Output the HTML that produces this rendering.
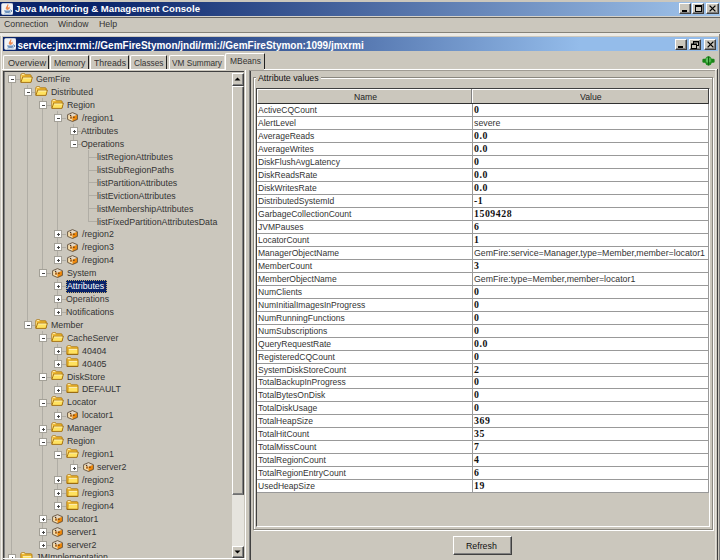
<!DOCTYPE html>
<html><head><meta charset="utf-8"><style>
html,body{margin:0;padding:0;}
body{width:720px;height:560px;overflow:hidden;position:relative;background:#CBC7BD;font-family:'Liberation Sans', sans-serif;}
.t{position:absolute;white-space:nowrap;line-height:1;}
.b{position:absolute;background:#CBC7BD;box-sizing:border-box;border-top:1px solid #fff;border-left:1px solid #fff;border-right:1px solid #404040;border-bottom:1px solid #404040;box-shadow:inset -1px -1px 0 #808080;}
</style></head><body>

<div style="position:absolute;left:0px;top:2px;width:720px;height:14px;background:linear-gradient(to right,#0A246A 0px,#0A246A 97px,#A6CAF0 738px);"></div>
<svg style="position:absolute;left:1px;top:3px" width="12" height="12" viewBox="0 0 12 12" preserveAspectRatio="none"><rect x="0.4" y="0.2" width="11.6" height="11.6" rx="1.8" fill="#F2F4F6" stroke="#D8DEE6" stroke-width="0.5"/>
<path d="M6.8 1 C8.8 2 5.8 3.4 7.6 4.4 C9.2 5.3 7.8 6.5 6.6 6.9 C4.6 6.6 4.2 5.2 5.2 4 C6 3 6.2 2 6.8 1Z" fill="#EE8A50"/>
<path d="M8.3 3.2 C9.6 4 9.4 5.6 8.2 6.6 C8.6 5.6 8 4.4 8.3 3.2Z" fill="#F2A070"/>
<path d="M3.2 7 Q6.6 8.2 9.6 7 L9 9.4 Q6.4 10.6 3.8 9.4 Z" fill="#6E94C0"/>
<path d="M9.4 6.6 L11 8 L9.4 9.4" fill="none" stroke="#5A7EAC" stroke-width="0.9"/>
<path d="M3 10.8 Q6.4 11.6 9.6 10.8" fill="none" stroke="#8AAAD0" stroke-width="0.7"/></svg>
<div class="t" style="left:15px;top:3.8px;font-size:9.6px;color:#fff;font-weight:bold;font-family:'Liberation Sans', sans-serif;">Java Monitoring &amp; Management Console</div>
<div class="b" style="left:679px;top:3px;width:12px;height:11px;"></div>
<div style="position:absolute;left:682px;top:10px;width:5px;height:2px;background:#000;"></div>
<div class="b" style="left:692px;top:3px;width:12px;height:11px;"></div>
<div style="position:absolute;left:694.5px;top:5px;width:7px;height:7px;box-sizing:border-box;border:1px solid #000;border-top-width:2px;"></div>
<div class="b" style="left:706px;top:3px;width:13px;height:11px;"></div>
<svg style="position:absolute;left:709px;top:5px" width="7" height="7" viewBox="0 0 7 7" preserveAspectRatio="none"><path d="M0.6 0.6 L6.4 6.4 M6.4 0.6 L0.6 6.4" stroke="#000" stroke-width="1.3"/></svg>
<div style="position:absolute;left:0px;top:16px;width:720px;height:1px;background:#D6D2CA;"></div>
<div style="position:absolute;left:0px;top:17px;width:720px;height:1px;background:#66645E;"></div>
<div class="t" style="left:3.5px;top:20px;font-size:8.8px;color:#333;font-weight:normal;font-family:'Liberation Sans', sans-serif;transform:scaleX(0.9929);transform-origin:0 0;">Connection</div>
<div class="t" style="left:58px;top:20px;font-size:8.8px;color:#333;font-weight:normal;font-family:'Liberation Sans', sans-serif;transform:scaleX(0.9745);transform-origin:0 0;">Window</div>
<div class="t" style="left:99px;top:20px;font-size:8.8px;color:#333;font-weight:normal;font-family:'Liberation Sans', sans-serif;">Help</div>
<div style="position:absolute;left:0px;top:32px;width:720px;height:1px;background:#858279;"></div>
<div style="position:absolute;left:0px;top:33px;width:720px;height:3px;background:#ECEAE5;"></div>
<div style="position:absolute;left:1px;top:34px;width:1px;height:526px;background:#F2F0EC;"></div>
<div style="position:absolute;left:719px;top:34px;width:1px;height:526px;background:#808080;"></div>
<div style="position:absolute;left:3px;top:37px;width:715px;height:14px;background:linear-gradient(to right,#0A246A 0px,#0A246A 87px,#94BCEA 577px);"></div>
<svg style="position:absolute;left:4px;top:38px" width="12" height="12" viewBox="0 0 12 12" preserveAspectRatio="none"><rect x="0.4" y="0.2" width="11.6" height="11.6" rx="1.8" fill="#F2F4F6" stroke="#D8DEE6" stroke-width="0.5"/>
<path d="M6.8 1 C8.8 2 5.8 3.4 7.6 4.4 C9.2 5.3 7.8 6.5 6.6 6.9 C4.6 6.6 4.2 5.2 5.2 4 C6 3 6.2 2 6.8 1Z" fill="#EE8A50"/>
<path d="M8.3 3.2 C9.6 4 9.4 5.6 8.2 6.6 C8.6 5.6 8 4.4 8.3 3.2Z" fill="#F2A070"/>
<path d="M3.2 7 Q6.6 8.2 9.6 7 L9 9.4 Q6.4 10.6 3.8 9.4 Z" fill="#6E94C0"/>
<path d="M9.4 6.6 L11 8 L9.4 9.4" fill="none" stroke="#5A7EAC" stroke-width="0.9"/>
<path d="M3 10.8 Q6.4 11.6 9.6 10.8" fill="none" stroke="#8AAAD0" stroke-width="0.7"/></svg>
<div class="t" style="left:17.5px;top:40.5px;font-size:10px;color:#fff;font-weight:bold;font-family:'Liberation Sans', sans-serif;">service:jmx:rmi://GemFireStymon/jndi/rmi://GemFireStymon:1099/jmxrmi</div>
<div class="b" style="left:675px;top:39px;width:12px;height:11px;"></div>
<div style="position:absolute;left:678px;top:46px;width:5px;height:2px;background:#000;"></div>
<div class="b" style="left:689px;top:39px;width:12px;height:11px;"></div>
<svg style="position:absolute;left:691px;top:40.5px" width="8" height="8" viewBox="0 0 8 8" preserveAspectRatio="none"><rect x="2.5" y="0.5" width="5" height="4" fill="none" stroke="#000" stroke-width="1"/><rect x="2.5" y="0.5" width="5" height="1" fill="#000"/><rect x="0.5" y="3" width="5" height="4.5" fill="#CBC7BD" stroke="#000" stroke-width="1"/><rect x="0.5" y="3" width="5" height="1" fill="#000"/></svg>
<div class="b" style="left:704px;top:39px;width:12px;height:11px;"></div>
<svg style="position:absolute;left:707px;top:41px" width="7" height="7" viewBox="0 0 7 7" preserveAspectRatio="none"><path d="M0.6 0.6 L6.4 6.4 M6.4 0.6 L0.6 6.4" stroke="#000" stroke-width="1.3"/></svg>
<div style="position:absolute;left:3px;top:55px;width:46px;height:14px;box-sizing:border-box;border-top:1px solid #fff;border-left:1px solid #fff;border-right:1px solid #202020;border-radius:2px 1px 0 0;"></div>
<div class="t" style="left:8px;top:58.5px;font-size:8.8px;color:#333;font-weight:normal;font-family:'Liberation Sans', sans-serif;transform:scaleX(1.0362);transform-origin:0 0;">Overview</div>
<div style="position:absolute;left:50px;top:55px;width:39px;height:14px;box-sizing:border-box;border-top:1px solid #fff;border-left:1px solid #fff;border-right:1px solid #202020;border-radius:2px 1px 0 0;"></div>
<div class="t" style="left:54px;top:58.5px;font-size:8.8px;color:#333;font-weight:normal;font-family:'Liberation Sans', sans-serif;transform:scaleX(0.9881);transform-origin:0 0;">Memory</div>
<div style="position:absolute;left:90px;top:55px;width:39px;height:14px;box-sizing:border-box;border-top:1px solid #fff;border-left:1px solid #fff;border-right:1px solid #202020;border-radius:2px 1px 0 0;"></div>
<div class="t" style="left:93.7px;top:58.5px;font-size:8.8px;color:#333;font-weight:normal;font-family:'Liberation Sans', sans-serif;transform:scaleX(0.9913);transform-origin:0 0;">Threads</div>
<div style="position:absolute;left:130px;top:55px;width:37px;height:14px;box-sizing:border-box;border-top:1px solid #fff;border-left:1px solid #fff;border-right:1px solid #202020;border-radius:2px 1px 0 0;"></div>
<div class="t" style="left:134px;top:58.5px;font-size:8.8px;color:#333;font-weight:normal;font-family:'Liberation Sans', sans-serif;transform:scaleX(0.9426);transform-origin:0 0;">Classes</div>
<div style="position:absolute;left:169px;top:55px;width:56px;height:14px;box-sizing:border-box;border-top:1px solid #fff;border-left:1px solid #fff;border-right:1px solid #E8E6E0;border-radius:2px 1px 0 0;"></div>
<div class="t" style="left:172px;top:58.5px;font-size:8.8px;color:#333;font-weight:normal;font-family:'Liberation Sans', sans-serif;transform:scaleX(0.9382);transform-origin:0 0;">VM Summary</div>
<div style="position:absolute;left:225px;top:53px;width:40px;height:17px;background:#CBC7BD;box-sizing:border-box;border-top:1px solid #fff;border-left:1px solid #fff;border-right:1px solid #202020;border-radius:2px 1px 0 0;"></div>
<div class="t" style="left:230px;top:56.5px;font-size:8.8px;color:#333;font-weight:normal;font-family:'Liberation Sans', sans-serif;transform:scaleX(0.9603);transform-origin:0 0;">MBeans</div>
<div style="position:absolute;left:2px;top:69px;width:223px;height:1px;background:#fff;"></div>
<div style="position:absolute;left:264px;top:69px;width:453px;height:1px;background:#fff;"></div>
<div style="position:absolute;left:717px;top:69px;width:1px;height:491px;background:#404040;"></div>
<svg style="position:absolute;left:701.5px;top:56px" width="13" height="10" viewBox="0 0 13 10" preserveAspectRatio="none"><rect x="0.4" y="2.8" width="4.2" height="4" rx="1.2" fill="#188418"/><rect x="8.4" y="2.8" width="4.2" height="4" rx="1.2" fill="#188418"/><ellipse cx="6.5" cy="4.9" rx="3.6" ry="4.6" fill="#1E901E"/><ellipse cx="5.3" cy="4.2" rx="1.3" ry="2.6" fill="#62C062"/><ellipse cx="7.8" cy="4.2" rx="1.1" ry="2.4" fill="#52B452"/><path d="M6.5 0.6 V9.4" stroke="#0E5A0E" stroke-width="0.9"/></svg>
<div style="position:absolute;left:3px;top:71px;width:241px;height:489px;box-sizing:border-box;border-top:1px solid #404040;border-left:1px solid #404040;"></div>
<div style="position:absolute;left:4px;top:72px;width:1px;height:488px;background:#808080;"></div>
<div style="position:absolute;left:245px;top:70px;width:1px;height:490px;background:#fff;"></div>
<div style="position:absolute;left:249px;top:70px;width:467px;height:490px;box-sizing:border-box;border-top:1px solid #A09C94;border-left:1px solid #808080;"></div>
<div style="position:absolute;left:250px;top:71px;width:1px;height:489px;background:#404040;"></div>
<div style="position:absolute;left:715px;top:70px;width:1px;height:490px;background:#E4E1DA;"></div>
<div style="position:absolute;left:253px;top:77px;width:460px;height:453px;box-sizing:border-box;border:1px solid #8A877F;box-shadow:inset 1px 1px 0 #fff, 1px 1px 0 #fff;"></div>
<div class="t" style="left:256px;top:74px;font-size:8.8px;color:#111;background:#CBC7BD;padding:0 2px;">Attribute values</div>
<div style="position:absolute;left:256px;top:88px;width:454px;height:439px;box-sizing:border-box;border-top:1px solid #404040;border-left:1px solid #404040;border-right:1px solid #fff;border-bottom:1px solid #fff;"></div>
<div style="position:absolute;left:257px;top:89px;width:452px;height:15px;background:#CBC7BD;box-sizing:border-box;border-bottom:1px solid #303030;border-top:1px solid #fff;border-left:1px solid #fff;"></div>
<div style="position:absolute;left:708px;top:89px;width:1px;height:15px;background:#404040;"></div>
<div style="position:absolute;left:471px;top:89px;width:1px;height:14px;background:#808080;"></div>
<div style="position:absolute;left:472px;top:89px;width:1px;height:14px;background:#fff;"></div>
<div class="t" style="left:353.5px;top:92.5px;font-size:8.8px;color:#222;font-weight:normal;font-family:'Liberation Sans', sans-serif;transform:scaleX(0.9799);transform-origin:0 0;">Name</div>
<div class="t" style="left:579.5px;top:92.5px;font-size:8.8px;color:#222;font-weight:normal;font-family:'Liberation Sans', sans-serif;transform:scaleX(0.9884);transform-origin:0 0;">Value</div>
<div style="position:absolute;left:257px;top:104px;width:452px;height:388px;background:#fff;"></div>
<div style="position:absolute;left:257px;top:116px;width:452px;height:1px;background:#999;"></div>
<div class="t" style="left:258px;top:105.5px;font-size:8.8px;color:#333;font-weight:normal;font-family:'Liberation Sans', sans-serif;transform:scaleX(0.9700);transform-origin:0 0;">ActiveCQCount</div>
<div class="t" style="left:474px;top:104.5px;font-size:9.8px;color:#111;font-weight:bold;font-family:'Liberation Serif', serif;letter-spacing:0.55px;">0</div>
<div style="position:absolute;left:257px;top:129px;width:452px;height:1px;background:#999;"></div>
<div class="t" style="left:258px;top:118.5px;font-size:8.8px;color:#333;font-weight:normal;font-family:'Liberation Sans', sans-serif;transform:scaleX(0.9700);transform-origin:0 0;">AlertLevel</div>
<div class="t" style="left:474px;top:118.5px;font-size:8.8px;color:#333;font-weight:normal;font-family:'Liberation Sans', sans-serif;">severe</div>
<div style="position:absolute;left:257px;top:142px;width:452px;height:1px;background:#999;"></div>
<div class="t" style="left:258px;top:131.5px;font-size:8.8px;color:#333;font-weight:normal;font-family:'Liberation Sans', sans-serif;transform:scaleX(0.9700);transform-origin:0 0;">AverageReads</div>
<div class="t" style="left:474px;top:130.5px;font-size:9.8px;color:#111;font-weight:bold;font-family:'Liberation Serif', serif;letter-spacing:0.55px;">0.0</div>
<div style="position:absolute;left:257px;top:155px;width:452px;height:1px;background:#999;"></div>
<div class="t" style="left:258px;top:144.5px;font-size:8.8px;color:#333;font-weight:normal;font-family:'Liberation Sans', sans-serif;transform:scaleX(0.9700);transform-origin:0 0;">AverageWrites</div>
<div class="t" style="left:474px;top:143.5px;font-size:9.8px;color:#111;font-weight:bold;font-family:'Liberation Serif', serif;letter-spacing:0.55px;">0.0</div>
<div style="position:absolute;left:257px;top:168px;width:452px;height:1px;background:#999;"></div>
<div class="t" style="left:258px;top:157.5px;font-size:8.8px;color:#333;font-weight:normal;font-family:'Liberation Sans', sans-serif;transform:scaleX(0.9700);transform-origin:0 0;">DiskFlushAvgLatency</div>
<div class="t" style="left:474px;top:156.5px;font-size:9.8px;color:#111;font-weight:bold;font-family:'Liberation Serif', serif;letter-spacing:0.55px;">0</div>
<div style="position:absolute;left:257px;top:181px;width:452px;height:1px;background:#999;"></div>
<div class="t" style="left:258px;top:170.5px;font-size:8.8px;color:#333;font-weight:normal;font-family:'Liberation Sans', sans-serif;transform:scaleX(0.9700);transform-origin:0 0;">DiskReadsRate</div>
<div class="t" style="left:474px;top:169.5px;font-size:9.8px;color:#111;font-weight:bold;font-family:'Liberation Serif', serif;letter-spacing:0.55px;">0.0</div>
<div style="position:absolute;left:257px;top:194px;width:452px;height:1px;background:#999;"></div>
<div class="t" style="left:258px;top:183.5px;font-size:8.8px;color:#333;font-weight:normal;font-family:'Liberation Sans', sans-serif;transform:scaleX(0.9700);transform-origin:0 0;">DiskWritesRate</div>
<div class="t" style="left:474px;top:182.5px;font-size:9.8px;color:#111;font-weight:bold;font-family:'Liberation Serif', serif;letter-spacing:0.55px;">0.0</div>
<div style="position:absolute;left:257px;top:207px;width:452px;height:1px;background:#999;"></div>
<div class="t" style="left:258px;top:196.5px;font-size:8.8px;color:#333;font-weight:normal;font-family:'Liberation Sans', sans-serif;transform:scaleX(0.9700);transform-origin:0 0;">DistributedSystemId</div>
<div class="t" style="left:474px;top:195.5px;font-size:9.8px;color:#111;font-weight:bold;font-family:'Liberation Serif', serif;letter-spacing:0.55px;">-1</div>
<div style="position:absolute;left:257px;top:220px;width:452px;height:1px;background:#999;"></div>
<div class="t" style="left:258px;top:209.5px;font-size:8.8px;color:#333;font-weight:normal;font-family:'Liberation Sans', sans-serif;transform:scaleX(0.9700);transform-origin:0 0;">GarbageCollectionCount</div>
<div class="t" style="left:474px;top:208.5px;font-size:9.8px;color:#111;font-weight:bold;font-family:'Liberation Serif', serif;letter-spacing:0.55px;">1509428</div>
<div style="position:absolute;left:257px;top:233px;width:452px;height:1px;background:#999;"></div>
<div class="t" style="left:258px;top:222.5px;font-size:8.8px;color:#333;font-weight:normal;font-family:'Liberation Sans', sans-serif;transform:scaleX(0.9700);transform-origin:0 0;">JVMPauses</div>
<div class="t" style="left:474px;top:221.5px;font-size:9.8px;color:#111;font-weight:bold;font-family:'Liberation Serif', serif;letter-spacing:0.55px;">6</div>
<div style="position:absolute;left:257px;top:246px;width:452px;height:1px;background:#999;"></div>
<div class="t" style="left:258px;top:235.5px;font-size:8.8px;color:#333;font-weight:normal;font-family:'Liberation Sans', sans-serif;transform:scaleX(0.9700);transform-origin:0 0;">LocatorCount</div>
<div class="t" style="left:474px;top:234.5px;font-size:9.8px;color:#111;font-weight:bold;font-family:'Liberation Serif', serif;letter-spacing:0.55px;">1</div>
<div style="position:absolute;left:257px;top:259px;width:452px;height:1px;background:#999;"></div>
<div class="t" style="left:258px;top:248.5px;font-size:8.8px;color:#333;font-weight:normal;font-family:'Liberation Sans', sans-serif;transform:scaleX(0.9700);transform-origin:0 0;">ManagerObjectName</div>
<div class="t" style="left:474px;top:248.5px;font-size:8.8px;color:#333;font-weight:normal;font-family:'Liberation Sans', sans-serif;">GemFire:service=Manager,type=Member,member=locator1</div>
<div style="position:absolute;left:257px;top:272px;width:452px;height:1px;background:#999;"></div>
<div class="t" style="left:258px;top:261.5px;font-size:8.8px;color:#333;font-weight:normal;font-family:'Liberation Sans', sans-serif;transform:scaleX(0.9700);transform-origin:0 0;">MemberCount</div>
<div class="t" style="left:474px;top:260.5px;font-size:9.8px;color:#111;font-weight:bold;font-family:'Liberation Serif', serif;letter-spacing:0.55px;">3</div>
<div style="position:absolute;left:257px;top:285px;width:452px;height:1px;background:#999;"></div>
<div class="t" style="left:258px;top:274.5px;font-size:8.8px;color:#333;font-weight:normal;font-family:'Liberation Sans', sans-serif;transform:scaleX(0.9700);transform-origin:0 0;">MemberObjectName</div>
<div class="t" style="left:474px;top:274.5px;font-size:8.8px;color:#333;font-weight:normal;font-family:'Liberation Sans', sans-serif;">GemFire:type=Member,member=locator1</div>
<div style="position:absolute;left:257px;top:298px;width:452px;height:1px;background:#999;"></div>
<div class="t" style="left:258px;top:287.5px;font-size:8.8px;color:#333;font-weight:normal;font-family:'Liberation Sans', sans-serif;transform:scaleX(0.9700);transform-origin:0 0;">NumClients</div>
<div class="t" style="left:474px;top:286.5px;font-size:9.8px;color:#111;font-weight:bold;font-family:'Liberation Serif', serif;letter-spacing:0.55px;">0</div>
<div style="position:absolute;left:257px;top:311px;width:452px;height:1px;background:#999;"></div>
<div class="t" style="left:258px;top:300.5px;font-size:8.8px;color:#333;font-weight:normal;font-family:'Liberation Sans', sans-serif;transform:scaleX(0.9700);transform-origin:0 0;">NumInitialImagesInProgress</div>
<div class="t" style="left:474px;top:299.5px;font-size:9.8px;color:#111;font-weight:bold;font-family:'Liberation Serif', serif;letter-spacing:0.55px;">0</div>
<div style="position:absolute;left:257px;top:324px;width:452px;height:1px;background:#999;"></div>
<div class="t" style="left:258px;top:313.5px;font-size:8.8px;color:#333;font-weight:normal;font-family:'Liberation Sans', sans-serif;transform:scaleX(0.9700);transform-origin:0 0;">NumRunningFunctions</div>
<div class="t" style="left:474px;top:312.5px;font-size:9.8px;color:#111;font-weight:bold;font-family:'Liberation Serif', serif;letter-spacing:0.55px;">0</div>
<div style="position:absolute;left:257px;top:337px;width:452px;height:1px;background:#999;"></div>
<div class="t" style="left:258px;top:326.5px;font-size:8.8px;color:#333;font-weight:normal;font-family:'Liberation Sans', sans-serif;transform:scaleX(0.9700);transform-origin:0 0;">NumSubscriptions</div>
<div class="t" style="left:474px;top:325.5px;font-size:9.8px;color:#111;font-weight:bold;font-family:'Liberation Serif', serif;letter-spacing:0.55px;">0</div>
<div style="position:absolute;left:257px;top:350px;width:452px;height:1px;background:#999;"></div>
<div class="t" style="left:258px;top:339.5px;font-size:8.8px;color:#333;font-weight:normal;font-family:'Liberation Sans', sans-serif;transform:scaleX(0.9700);transform-origin:0 0;">QueryRequestRate</div>
<div class="t" style="left:474px;top:338.5px;font-size:9.8px;color:#111;font-weight:bold;font-family:'Liberation Serif', serif;letter-spacing:0.55px;">0.0</div>
<div style="position:absolute;left:257px;top:363px;width:452px;height:1px;background:#999;"></div>
<div class="t" style="left:258px;top:352.5px;font-size:8.8px;color:#333;font-weight:normal;font-family:'Liberation Sans', sans-serif;transform:scaleX(0.9700);transform-origin:0 0;">RegisteredCQCount</div>
<div class="t" style="left:474px;top:351.5px;font-size:9.8px;color:#111;font-weight:bold;font-family:'Liberation Serif', serif;letter-spacing:0.55px;">0</div>
<div style="position:absolute;left:257px;top:376px;width:452px;height:1px;background:#999;"></div>
<div class="t" style="left:258px;top:365.5px;font-size:8.8px;color:#333;font-weight:normal;font-family:'Liberation Sans', sans-serif;transform:scaleX(0.9700);transform-origin:0 0;">SystemDiskStoreCount</div>
<div class="t" style="left:474px;top:364.5px;font-size:9.8px;color:#111;font-weight:bold;font-family:'Liberation Serif', serif;letter-spacing:0.55px;">2</div>
<div style="position:absolute;left:257px;top:388px;width:452px;height:1px;background:#999;"></div>
<div class="t" style="left:258px;top:377.5px;font-size:8.8px;color:#333;font-weight:normal;font-family:'Liberation Sans', sans-serif;transform:scaleX(0.9700);transform-origin:0 0;">TotalBackupInProgress</div>
<div class="t" style="left:474px;top:376.5px;font-size:9.8px;color:#111;font-weight:bold;font-family:'Liberation Serif', serif;letter-spacing:0.55px;">0</div>
<div style="position:absolute;left:257px;top:401px;width:452px;height:1px;background:#999;"></div>
<div class="t" style="left:258px;top:390.5px;font-size:8.8px;color:#333;font-weight:normal;font-family:'Liberation Sans', sans-serif;transform:scaleX(0.9700);transform-origin:0 0;">TotalBytesOnDisk</div>
<div class="t" style="left:474px;top:389.5px;font-size:9.8px;color:#111;font-weight:bold;font-family:'Liberation Serif', serif;letter-spacing:0.55px;">0</div>
<div style="position:absolute;left:257px;top:414px;width:452px;height:1px;background:#999;"></div>
<div class="t" style="left:258px;top:403.5px;font-size:8.8px;color:#333;font-weight:normal;font-family:'Liberation Sans', sans-serif;transform:scaleX(0.9700);transform-origin:0 0;">TotalDiskUsage</div>
<div class="t" style="left:474px;top:402.5px;font-size:9.8px;color:#111;font-weight:bold;font-family:'Liberation Serif', serif;letter-spacing:0.55px;">0</div>
<div style="position:absolute;left:257px;top:427px;width:452px;height:1px;background:#999;"></div>
<div class="t" style="left:258px;top:416.5px;font-size:8.8px;color:#333;font-weight:normal;font-family:'Liberation Sans', sans-serif;transform:scaleX(0.9700);transform-origin:0 0;">TotalHeapSize</div>
<div class="t" style="left:474px;top:415.5px;font-size:9.8px;color:#111;font-weight:bold;font-family:'Liberation Serif', serif;letter-spacing:0.55px;">369</div>
<div style="position:absolute;left:257px;top:440px;width:452px;height:1px;background:#999;"></div>
<div class="t" style="left:258px;top:429.5px;font-size:8.8px;color:#333;font-weight:normal;font-family:'Liberation Sans', sans-serif;transform:scaleX(0.9700);transform-origin:0 0;">TotalHitCount</div>
<div class="t" style="left:474px;top:428.5px;font-size:9.8px;color:#111;font-weight:bold;font-family:'Liberation Serif', serif;letter-spacing:0.55px;">35</div>
<div style="position:absolute;left:257px;top:453px;width:452px;height:1px;background:#999;"></div>
<div class="t" style="left:258px;top:442.5px;font-size:8.8px;color:#333;font-weight:normal;font-family:'Liberation Sans', sans-serif;transform:scaleX(0.9700);transform-origin:0 0;">TotalMissCount</div>
<div class="t" style="left:474px;top:441.5px;font-size:9.8px;color:#111;font-weight:bold;font-family:'Liberation Serif', serif;letter-spacing:0.55px;">7</div>
<div style="position:absolute;left:257px;top:466px;width:452px;height:1px;background:#999;"></div>
<div class="t" style="left:258px;top:455.5px;font-size:8.8px;color:#333;font-weight:normal;font-family:'Liberation Sans', sans-serif;transform:scaleX(0.9700);transform-origin:0 0;">TotalRegionCount</div>
<div class="t" style="left:474px;top:454.5px;font-size:9.8px;color:#111;font-weight:bold;font-family:'Liberation Serif', serif;letter-spacing:0.55px;">4</div>
<div style="position:absolute;left:257px;top:479px;width:452px;height:1px;background:#999;"></div>
<div class="t" style="left:258px;top:468.5px;font-size:8.8px;color:#333;font-weight:normal;font-family:'Liberation Sans', sans-serif;transform:scaleX(0.9700);transform-origin:0 0;">TotalRegionEntryCount</div>
<div class="t" style="left:474px;top:467.5px;font-size:9.8px;color:#111;font-weight:bold;font-family:'Liberation Serif', serif;letter-spacing:0.55px;">6</div>
<div style="position:absolute;left:257px;top:492px;width:452px;height:1px;background:#999;"></div>
<div class="t" style="left:258px;top:481.5px;font-size:8.8px;color:#333;font-weight:normal;font-family:'Liberation Sans', sans-serif;transform:scaleX(0.9700);transform-origin:0 0;">UsedHeapSize</div>
<div class="t" style="left:474px;top:480.5px;font-size:9.8px;color:#111;font-weight:bold;font-family:'Liberation Serif', serif;letter-spacing:0.55px;">19</div>
<div style="position:absolute;left:472px;top:104px;width:1px;height:388px;background:#999;"></div>
<div style="position:absolute;left:708px;top:104px;width:1px;height:388px;background:#999;"></div>
<div class="b" style="left:453px;top:536px;width:59px;height:19px;"></div>
<div class="t" style="left:466px;top:541.5px;font-size:8.8px;color:#111;font-weight:normal;font-family:'Liberation Sans', sans-serif;">Refresh</div>
<div style="position:absolute;left:5px;top:72px;width:227px;height:486px;overflow:hidden;">
<div style="position:absolute;left:7px;top:7px;width:8px;height:1px;background:#B0ADA5;"></div>
<div style="position:absolute;left:22px;top:13px;width:1px;height:240px;background:#B0ADA5;"></div>
<div style="position:absolute;left:22px;top:20px;width:8px;height:1px;background:#B0ADA5;"></div>
<div style="position:absolute;left:37px;top:26px;width:1px;height:175px;background:#B0ADA5;"></div>
<div style="position:absolute;left:38px;top:33px;width:8px;height:1px;background:#B0ADA5;"></div>
<div style="position:absolute;left:52px;top:39px;width:1px;height:149px;background:#B0ADA5;"></div>
<div style="position:absolute;left:53px;top:46px;width:8px;height:1px;background:#B0ADA5;"></div>
<div style="position:absolute;left:68px;top:52px;width:1px;height:20px;background:#B0ADA5;"></div>
<div style="position:absolute;left:68px;top:59px;width:8px;height:1px;background:#B0ADA5;"></div>
<div style="position:absolute;left:68px;top:72px;width:8px;height:1px;background:#B0ADA5;"></div>
<div style="position:absolute;left:83px;top:78px;width:1px;height:72px;background:#B0ADA5;"></div>
<div style="position:absolute;left:84px;top:85px;width:8px;height:1px;background:#B0ADA5;"></div>
<div style="position:absolute;left:84px;top:98px;width:8px;height:1px;background:#B0ADA5;"></div>
<div style="position:absolute;left:84px;top:110px;width:8px;height:1px;background:#B0ADA5;"></div>
<div style="position:absolute;left:84px;top:123px;width:8px;height:1px;background:#B0ADA5;"></div>
<div style="position:absolute;left:84px;top:136px;width:8px;height:1px;background:#B0ADA5;"></div>
<div style="position:absolute;left:84px;top:149px;width:8px;height:1px;background:#B0ADA5;"></div>
<div style="position:absolute;left:53px;top:162px;width:8px;height:1px;background:#B0ADA5;"></div>
<div style="position:absolute;left:53px;top:175px;width:8px;height:1px;background:#B0ADA5;"></div>
<div style="position:absolute;left:53px;top:188px;width:8px;height:1px;background:#B0ADA5;"></div>
<div style="position:absolute;left:38px;top:201px;width:8px;height:1px;background:#B0ADA5;"></div>
<div style="position:absolute;left:52px;top:207px;width:1px;height:33px;background:#B0ADA5;"></div>
<div style="position:absolute;left:53px;top:214px;width:8px;height:1px;background:#B0ADA5;"></div>
<div style="position:absolute;left:53px;top:227px;width:8px;height:1px;background:#B0ADA5;"></div>
<div style="position:absolute;left:53px;top:240px;width:8px;height:1px;background:#B0ADA5;"></div>
<div style="position:absolute;left:22px;top:253px;width:8px;height:1px;background:#B0ADA5;"></div>
<div style="position:absolute;left:37px;top:259px;width:1px;height:214px;background:#B0ADA5;"></div>
<div style="position:absolute;left:38px;top:266px;width:8px;height:1px;background:#B0ADA5;"></div>
<div style="position:absolute;left:52px;top:272px;width:1px;height:20px;background:#B0ADA5;"></div>
<div style="position:absolute;left:53px;top:279px;width:8px;height:1px;background:#B0ADA5;"></div>
<div style="position:absolute;left:53px;top:292px;width:8px;height:1px;background:#B0ADA5;"></div>
<div style="position:absolute;left:38px;top:305px;width:8px;height:1px;background:#B0ADA5;"></div>
<div style="position:absolute;left:52px;top:311px;width:1px;height:7px;background:#B0ADA5;"></div>
<div style="position:absolute;left:53px;top:318px;width:8px;height:1px;background:#B0ADA5;"></div>
<div style="position:absolute;left:38px;top:331px;width:8px;height:1px;background:#B0ADA5;"></div>
<div style="position:absolute;left:52px;top:337px;width:1px;height:7px;background:#B0ADA5;"></div>
<div style="position:absolute;left:53px;top:344px;width:8px;height:1px;background:#B0ADA5;"></div>
<div style="position:absolute;left:38px;top:357px;width:8px;height:1px;background:#B0ADA5;"></div>
<div style="position:absolute;left:38px;top:370px;width:8px;height:1px;background:#B0ADA5;"></div>
<div style="position:absolute;left:52px;top:376px;width:1px;height:59px;background:#B0ADA5;"></div>
<div style="position:absolute;left:53px;top:382px;width:8px;height:1px;background:#B0ADA5;"></div>
<div style="position:absolute;left:68px;top:388px;width:1px;height:7px;background:#B0ADA5;"></div>
<div style="position:absolute;left:68px;top:395px;width:8px;height:1px;background:#B0ADA5;"></div>
<div style="position:absolute;left:53px;top:408px;width:8px;height:1px;background:#B0ADA5;"></div>
<div style="position:absolute;left:53px;top:421px;width:8px;height:1px;background:#B0ADA5;"></div>
<div style="position:absolute;left:53px;top:434px;width:8px;height:1px;background:#B0ADA5;"></div>
<div style="position:absolute;left:38px;top:447px;width:8px;height:1px;background:#B0ADA5;"></div>
<div style="position:absolute;left:38px;top:460px;width:8px;height:1px;background:#B0ADA5;"></div>
<div style="position:absolute;left:38px;top:473px;width:8px;height:1px;background:#B0ADA5;"></div>
<div style="position:absolute;left:7px;top:486px;width:8px;height:1px;background:#B0ADA5;"></div>
<div style="position:absolute;left:6px;top:7px;width:1px;height:479px;background:#B0ADA5;"></div>
<div style="position:absolute;left:3px;top:3px;width:8px;height:8px;box-sizing:border-box;border:1px solid #A3A097;background:#fff;"><div style="position:absolute;left:1.5px;top:2.5px;width:3px;height:1px;background:#484848;"></div></div>
<svg style="position:absolute;left:15px;top:1px" width="13" height="10" viewBox="0 0 12.6 10" preserveAspectRatio="none"><path d="M0.8 2 Q0.8 0.8 2 0.8 H4.4 L5.4 1.8 H10 Q10.8 1.8 10.8 2.6 V8.8 H0.8 Z" fill="#F0B830" stroke="#A87008" stroke-width="0.8"/>
<path d="M1.6 1.6 H4.2" stroke="#FFF4C8" stroke-width="0.9"/>
<path d="M1.4 2.4 V7" stroke="#FFE890" stroke-width="0.8"/>
<path d="M2.6 4.2 H12 L10.6 9.4 H0.8 Z" fill="#FFE260" stroke="#9A6406" stroke-width="0.8"/>
<path d="M3 5 H11" stroke="#FFF6C8" stroke-width="0.8"/></svg>
<div class="t" style="left:31px;top:3px;font-size:8.8px;color:#333;font-weight:normal;font-family:'Liberation Sans', sans-serif;">GemFire</div>
<div style="position:absolute;left:19px;top:16px;width:8px;height:8px;box-sizing:border-box;border:1px solid #A3A097;background:#fff;"><div style="position:absolute;left:1.5px;top:2.5px;width:3px;height:1px;background:#484848;"></div></div>
<svg style="position:absolute;left:30px;top:14px" width="13" height="10" viewBox="0 0 12.6 10" preserveAspectRatio="none"><path d="M0.8 2 Q0.8 0.8 2 0.8 H4.4 L5.4 1.8 H10 Q10.8 1.8 10.8 2.6 V8.8 H0.8 Z" fill="#F0B830" stroke="#A87008" stroke-width="0.8"/>
<path d="M1.6 1.6 H4.2" stroke="#FFF4C8" stroke-width="0.9"/>
<path d="M1.4 2.4 V7" stroke="#FFE890" stroke-width="0.8"/>
<path d="M2.6 4.2 H12 L10.6 9.4 H0.8 Z" fill="#FFE260" stroke="#9A6406" stroke-width="0.8"/>
<path d="M3 5 H11" stroke="#FFF6C8" stroke-width="0.8"/></svg>
<div class="t" style="left:46px;top:16px;font-size:8.8px;color:#333;font-weight:normal;font-family:'Liberation Sans', sans-serif;">Distributed</div>
<div style="position:absolute;left:34px;top:29px;width:8px;height:8px;box-sizing:border-box;border:1px solid #A3A097;background:#fff;"><div style="position:absolute;left:1.5px;top:2.5px;width:3px;height:1px;background:#484848;"></div></div>
<svg style="position:absolute;left:46px;top:27px" width="13" height="10" viewBox="0 0 12.6 10" preserveAspectRatio="none"><path d="M0.8 2 Q0.8 0.8 2 0.8 H4.4 L5.4 1.8 H10 Q10.8 1.8 10.8 2.6 V8.8 H0.8 Z" fill="#F0B830" stroke="#A87008" stroke-width="0.8"/>
<path d="M1.6 1.6 H4.2" stroke="#FFF4C8" stroke-width="0.9"/>
<path d="M1.4 2.4 V7" stroke="#FFE890" stroke-width="0.8"/>
<path d="M2.6 4.2 H12 L10.6 9.4 H0.8 Z" fill="#FFE260" stroke="#9A6406" stroke-width="0.8"/>
<path d="M3 5 H11" stroke="#FFF6C8" stroke-width="0.8"/></svg>
<div class="t" style="left:62px;top:29px;font-size:8.8px;color:#333;font-weight:normal;font-family:'Liberation Sans', sans-serif;">Region</div>
<div style="position:absolute;left:49px;top:42px;width:8px;height:8px;box-sizing:border-box;border:1px solid #A3A097;background:#fff;"><div style="position:absolute;left:1.5px;top:2.5px;width:3px;height:1px;background:#484848;"></div></div>
<svg style="position:absolute;left:62px;top:40px" width="11" height="10" viewBox="0 0 11 10" preserveAspectRatio="none"><path d="M5.5 0.6 L10.4 2.7 L5.5 4.7 L0.6 2.7 Z" fill="#E4D6C2"/>
<path d="M0.6 2.7 L5.5 4.7 V9.5 L0.6 7.4 Z" fill="#F8DEAA"/>
<path d="M5.5 4.7 L10.4 2.7 V7.4 L5.5 9.5 Z" fill="#F08808"/>
<path d="M5.5 0.6 L10.4 2.7 V7.4 L5.5 9.5 L0.6 7.4 V2.7 Z" fill="none" stroke="#5A4834" stroke-width="0.85"/>
<ellipse cx="4" cy="5.6" rx="0.9" ry="1.5" fill="#A8601A"/>
<circle cx="3.6" cy="3.4" r="0.7" fill="#403020"/>
<circle cx="6.9" cy="5.2" r="0.7" fill="#403020"/></svg>
<div class="t" style="left:77px;top:42px;font-size:8.8px;color:#333;font-weight:normal;font-family:'Liberation Sans', sans-serif;">/region1</div>
<div style="position:absolute;left:65px;top:55px;width:8px;height:8px;box-sizing:border-box;border:1px solid #A3A097;background:#fff;"><div style="position:absolute;left:1.5px;top:2.5px;width:3px;height:1px;background:#484848;"></div><div style="position:absolute;left:2.5px;top:1.5px;width:1px;height:3px;background:#484848;"></div></div>
<div class="t" style="left:76px;top:55px;font-size:8.8px;color:#333;font-weight:normal;font-family:'Liberation Sans', sans-serif;">Attributes</div>
<div style="position:absolute;left:65px;top:68px;width:8px;height:8px;box-sizing:border-box;border:1px solid #A3A097;background:#fff;"><div style="position:absolute;left:1.5px;top:2.5px;width:3px;height:1px;background:#484848;"></div></div>
<div class="t" style="left:76px;top:68px;font-size:8.8px;color:#333;font-weight:normal;font-family:'Liberation Sans', sans-serif;">Operations</div>
<div class="t" style="left:92px;top:81px;font-size:8.8px;color:#333;font-weight:normal;font-family:'Liberation Sans', sans-serif;">listRegionAttributes</div>
<div class="t" style="left:92px;top:94px;font-size:8.8px;color:#333;font-weight:normal;font-family:'Liberation Sans', sans-serif;">listSubRegionPaths</div>
<div class="t" style="left:92px;top:107px;font-size:8.8px;color:#333;font-weight:normal;font-family:'Liberation Sans', sans-serif;">listPartitionAttributes</div>
<div class="t" style="left:92px;top:120px;font-size:8.8px;color:#333;font-weight:normal;font-family:'Liberation Sans', sans-serif;">listEvictionAttributes</div>
<div class="t" style="left:92px;top:133px;font-size:8.8px;color:#333;font-weight:normal;font-family:'Liberation Sans', sans-serif;">listMembershipAttributes</div>
<div class="t" style="left:92px;top:146px;font-size:8.8px;color:#333;font-weight:normal;font-family:'Liberation Sans', sans-serif;">listFixedPartitionAttributesData</div>
<div style="position:absolute;left:49px;top:158px;width:8px;height:8px;box-sizing:border-box;border:1px solid #A3A097;background:#fff;"><div style="position:absolute;left:1.5px;top:2.5px;width:3px;height:1px;background:#484848;"></div><div style="position:absolute;left:2.5px;top:1.5px;width:1px;height:3px;background:#484848;"></div></div>
<svg style="position:absolute;left:62px;top:157px" width="11" height="10" viewBox="0 0 11 10" preserveAspectRatio="none"><path d="M5.5 0.6 L10.4 2.7 L5.5 4.7 L0.6 2.7 Z" fill="#E4D6C2"/>
<path d="M0.6 2.7 L5.5 4.7 V9.5 L0.6 7.4 Z" fill="#F8DEAA"/>
<path d="M5.5 4.7 L10.4 2.7 V7.4 L5.5 9.5 Z" fill="#F08808"/>
<path d="M5.5 0.6 L10.4 2.7 V7.4 L5.5 9.5 L0.6 7.4 V2.7 Z" fill="none" stroke="#5A4834" stroke-width="0.85"/>
<ellipse cx="4" cy="5.6" rx="0.9" ry="1.5" fill="#A8601A"/>
<circle cx="3.6" cy="3.4" r="0.7" fill="#403020"/>
<circle cx="6.9" cy="5.2" r="0.7" fill="#403020"/></svg>
<div class="t" style="left:77px;top:158px;font-size:8.8px;color:#333;font-weight:normal;font-family:'Liberation Sans', sans-serif;">/region2</div>
<div style="position:absolute;left:49px;top:171px;width:8px;height:8px;box-sizing:border-box;border:1px solid #A3A097;background:#fff;"><div style="position:absolute;left:1.5px;top:2.5px;width:3px;height:1px;background:#484848;"></div><div style="position:absolute;left:2.5px;top:1.5px;width:1px;height:3px;background:#484848;"></div></div>
<svg style="position:absolute;left:62px;top:170px" width="11" height="10" viewBox="0 0 11 10" preserveAspectRatio="none"><path d="M5.5 0.6 L10.4 2.7 L5.5 4.7 L0.6 2.7 Z" fill="#E4D6C2"/>
<path d="M0.6 2.7 L5.5 4.7 V9.5 L0.6 7.4 Z" fill="#F8DEAA"/>
<path d="M5.5 4.7 L10.4 2.7 V7.4 L5.5 9.5 Z" fill="#F08808"/>
<path d="M5.5 0.6 L10.4 2.7 V7.4 L5.5 9.5 L0.6 7.4 V2.7 Z" fill="none" stroke="#5A4834" stroke-width="0.85"/>
<ellipse cx="4" cy="5.6" rx="0.9" ry="1.5" fill="#A8601A"/>
<circle cx="3.6" cy="3.4" r="0.7" fill="#403020"/>
<circle cx="6.9" cy="5.2" r="0.7" fill="#403020"/></svg>
<div class="t" style="left:77px;top:171px;font-size:8.8px;color:#333;font-weight:normal;font-family:'Liberation Sans', sans-serif;">/region3</div>
<div style="position:absolute;left:49px;top:184px;width:8px;height:8px;box-sizing:border-box;border:1px solid #A3A097;background:#fff;"><div style="position:absolute;left:1.5px;top:2.5px;width:3px;height:1px;background:#484848;"></div><div style="position:absolute;left:2.5px;top:1.5px;width:1px;height:3px;background:#484848;"></div></div>
<svg style="position:absolute;left:62px;top:183px" width="11" height="10" viewBox="0 0 11 10" preserveAspectRatio="none"><path d="M5.5 0.6 L10.4 2.7 L5.5 4.7 L0.6 2.7 Z" fill="#E4D6C2"/>
<path d="M0.6 2.7 L5.5 4.7 V9.5 L0.6 7.4 Z" fill="#F8DEAA"/>
<path d="M5.5 4.7 L10.4 2.7 V7.4 L5.5 9.5 Z" fill="#F08808"/>
<path d="M5.5 0.6 L10.4 2.7 V7.4 L5.5 9.5 L0.6 7.4 V2.7 Z" fill="none" stroke="#5A4834" stroke-width="0.85"/>
<ellipse cx="4" cy="5.6" rx="0.9" ry="1.5" fill="#A8601A"/>
<circle cx="3.6" cy="3.4" r="0.7" fill="#403020"/>
<circle cx="6.9" cy="5.2" r="0.7" fill="#403020"/></svg>
<div class="t" style="left:77px;top:184px;font-size:8.8px;color:#333;font-weight:normal;font-family:'Liberation Sans', sans-serif;">/region4</div>
<div style="position:absolute;left:34px;top:197px;width:8px;height:8px;box-sizing:border-box;border:1px solid #A3A097;background:#fff;"><div style="position:absolute;left:1.5px;top:2.5px;width:3px;height:1px;background:#484848;"></div></div>
<svg style="position:absolute;left:47px;top:196px" width="11" height="10" viewBox="0 0 11 10" preserveAspectRatio="none"><path d="M5.5 0.6 L10.4 2.7 L5.5 4.7 L0.6 2.7 Z" fill="#E4D6C2"/>
<path d="M0.6 2.7 L5.5 4.7 V9.5 L0.6 7.4 Z" fill="#F8DEAA"/>
<path d="M5.5 4.7 L10.4 2.7 V7.4 L5.5 9.5 Z" fill="#F08808"/>
<path d="M5.5 0.6 L10.4 2.7 V7.4 L5.5 9.5 L0.6 7.4 V2.7 Z" fill="none" stroke="#5A4834" stroke-width="0.85"/>
<ellipse cx="4" cy="5.6" rx="0.9" ry="1.5" fill="#A8601A"/>
<circle cx="3.6" cy="3.4" r="0.7" fill="#403020"/>
<circle cx="6.9" cy="5.2" r="0.7" fill="#403020"/></svg>
<div class="t" style="left:62px;top:197px;font-size:8.8px;color:#333;font-weight:normal;font-family:'Liberation Sans', sans-serif;">System</div>
<div style="position:absolute;left:49px;top:210px;width:8px;height:8px;box-sizing:border-box;border:1px solid #A3A097;background:#fff;"><div style="position:absolute;left:1.5px;top:2.5px;width:3px;height:1px;background:#484848;"></div><div style="position:absolute;left:2.5px;top:1.5px;width:1px;height:3px;background:#484848;"></div></div>
<div style="position:absolute;left:61px;top:208px;width:41px;height:13px;background:#0A246A;box-sizing:border-box;border:1px dotted #C8B070;"></div>
<div class="t" style="left:62px;top:210px;font-size:8.8px;color:#fff;font-weight:normal;font-family:'Liberation Sans', sans-serif;">Attributes</div>
<div style="position:absolute;left:49px;top:223px;width:8px;height:8px;box-sizing:border-box;border:1px solid #A3A097;background:#fff;"><div style="position:absolute;left:1.5px;top:2.5px;width:3px;height:1px;background:#484848;"></div><div style="position:absolute;left:2.5px;top:1.5px;width:1px;height:3px;background:#484848;"></div></div>
<div class="t" style="left:61px;top:223px;font-size:8.8px;color:#333;font-weight:normal;font-family:'Liberation Sans', sans-serif;">Operations</div>
<div style="position:absolute;left:49px;top:236px;width:8px;height:8px;box-sizing:border-box;border:1px solid #A3A097;background:#fff;"><div style="position:absolute;left:1.5px;top:2.5px;width:3px;height:1px;background:#484848;"></div><div style="position:absolute;left:2.5px;top:1.5px;width:1px;height:3px;background:#484848;"></div></div>
<div class="t" style="left:61px;top:236px;font-size:8.8px;color:#333;font-weight:normal;font-family:'Liberation Sans', sans-serif;">Notifications</div>
<div style="position:absolute;left:19px;top:249px;width:8px;height:8px;box-sizing:border-box;border:1px solid #A3A097;background:#fff;"><div style="position:absolute;left:1.5px;top:2.5px;width:3px;height:1px;background:#484848;"></div></div>
<svg style="position:absolute;left:30px;top:247px" width="13" height="10" viewBox="0 0 12.6 10" preserveAspectRatio="none"><path d="M0.8 2 Q0.8 0.8 2 0.8 H4.4 L5.4 1.8 H10 Q10.8 1.8 10.8 2.6 V8.8 H0.8 Z" fill="#F0B830" stroke="#A87008" stroke-width="0.8"/>
<path d="M1.6 1.6 H4.2" stroke="#FFF4C8" stroke-width="0.9"/>
<path d="M1.4 2.4 V7" stroke="#FFE890" stroke-width="0.8"/>
<path d="M2.6 4.2 H12 L10.6 9.4 H0.8 Z" fill="#FFE260" stroke="#9A6406" stroke-width="0.8"/>
<path d="M3 5 H11" stroke="#FFF6C8" stroke-width="0.8"/></svg>
<div class="t" style="left:46px;top:249px;font-size:8.8px;color:#333;font-weight:normal;font-family:'Liberation Sans', sans-serif;">Member</div>
<div style="position:absolute;left:34px;top:262px;width:8px;height:8px;box-sizing:border-box;border:1px solid #A3A097;background:#fff;"><div style="position:absolute;left:1.5px;top:2.5px;width:3px;height:1px;background:#484848;"></div></div>
<svg style="position:absolute;left:46px;top:260px" width="13" height="10" viewBox="0 0 12.6 10" preserveAspectRatio="none"><path d="M0.8 2 Q0.8 0.8 2 0.8 H4.4 L5.4 1.8 H10 Q10.8 1.8 10.8 2.6 V8.8 H0.8 Z" fill="#F0B830" stroke="#A87008" stroke-width="0.8"/>
<path d="M1.6 1.6 H4.2" stroke="#FFF4C8" stroke-width="0.9"/>
<path d="M1.4 2.4 V7" stroke="#FFE890" stroke-width="0.8"/>
<path d="M2.6 4.2 H12 L10.6 9.4 H0.8 Z" fill="#FFE260" stroke="#9A6406" stroke-width="0.8"/>
<path d="M3 5 H11" stroke="#FFF6C8" stroke-width="0.8"/></svg>
<div class="t" style="left:62px;top:262px;font-size:8.8px;color:#333;font-weight:normal;font-family:'Liberation Sans', sans-serif;">CacheServer</div>
<div style="position:absolute;left:49px;top:275px;width:8px;height:8px;box-sizing:border-box;border:1px solid #A3A097;background:#fff;"><div style="position:absolute;left:1.5px;top:2.5px;width:3px;height:1px;background:#484848;"></div><div style="position:absolute;left:2.5px;top:1.5px;width:1px;height:3px;background:#484848;"></div></div>
<svg style="position:absolute;left:61px;top:273px" width="13" height="10" viewBox="0 0 12.6 10" preserveAspectRatio="none"><path d="M0.8 2 Q0.8 0.8 2 0.8 H4.4 L5.4 1.8 H10.6 Q11.6 1.8 11.6 2.8 V9.2 H0.8 Z" fill="#F0B830" stroke="#A87008" stroke-width="0.8"/>
<path d="M1.6 1.6 H4.2" stroke="#FFF4C8" stroke-width="0.9"/>
<path d="M2.4 3.8 H11.4 V9.2 H1.8 Z" fill="#FFE260" stroke="#C08A10" stroke-width="0.6"/>
<path d="M2.6 4.4 H10.8" stroke="#FFF6D0" stroke-width="0.8"/>
<path d="M0.8 9.4 H11.8" stroke="#8A5A08" stroke-width="0.8"/></svg>
<div class="t" style="left:77px;top:275px;font-size:8.8px;color:#333;font-weight:normal;font-family:'Liberation Sans', sans-serif;">40404</div>
<div style="position:absolute;left:49px;top:288px;width:8px;height:8px;box-sizing:border-box;border:1px solid #A3A097;background:#fff;"><div style="position:absolute;left:1.5px;top:2.5px;width:3px;height:1px;background:#484848;"></div><div style="position:absolute;left:2.5px;top:1.5px;width:1px;height:3px;background:#484848;"></div></div>
<svg style="position:absolute;left:61px;top:285px" width="13" height="10" viewBox="0 0 12.6 10" preserveAspectRatio="none"><path d="M0.8 2 Q0.8 0.8 2 0.8 H4.4 L5.4 1.8 H10.6 Q11.6 1.8 11.6 2.8 V9.2 H0.8 Z" fill="#F0B830" stroke="#A87008" stroke-width="0.8"/>
<path d="M1.6 1.6 H4.2" stroke="#FFF4C8" stroke-width="0.9"/>
<path d="M2.4 3.8 H11.4 V9.2 H1.8 Z" fill="#FFE260" stroke="#C08A10" stroke-width="0.6"/>
<path d="M2.6 4.4 H10.8" stroke="#FFF6D0" stroke-width="0.8"/>
<path d="M0.8 9.4 H11.8" stroke="#8A5A08" stroke-width="0.8"/></svg>
<div class="t" style="left:77px;top:288px;font-size:8.8px;color:#333;font-weight:normal;font-family:'Liberation Sans', sans-serif;">40405</div>
<div style="position:absolute;left:34px;top:301px;width:8px;height:8px;box-sizing:border-box;border:1px solid #A3A097;background:#fff;"><div style="position:absolute;left:1.5px;top:2.5px;width:3px;height:1px;background:#484848;"></div></div>
<svg style="position:absolute;left:46px;top:298px" width="13" height="10" viewBox="0 0 12.6 10" preserveAspectRatio="none"><path d="M0.8 2 Q0.8 0.8 2 0.8 H4.4 L5.4 1.8 H10 Q10.8 1.8 10.8 2.6 V8.8 H0.8 Z" fill="#F0B830" stroke="#A87008" stroke-width="0.8"/>
<path d="M1.6 1.6 H4.2" stroke="#FFF4C8" stroke-width="0.9"/>
<path d="M1.4 2.4 V7" stroke="#FFE890" stroke-width="0.8"/>
<path d="M2.6 4.2 H12 L10.6 9.4 H0.8 Z" fill="#FFE260" stroke="#9A6406" stroke-width="0.8"/>
<path d="M3 5 H11" stroke="#FFF6C8" stroke-width="0.8"/></svg>
<div class="t" style="left:62px;top:301px;font-size:8.8px;color:#333;font-weight:normal;font-family:'Liberation Sans', sans-serif;">DiskStore</div>
<div style="position:absolute;left:49px;top:314px;width:8px;height:8px;box-sizing:border-box;border:1px solid #A3A097;background:#fff;"><div style="position:absolute;left:1.5px;top:2.5px;width:3px;height:1px;background:#484848;"></div><div style="position:absolute;left:2.5px;top:1.5px;width:1px;height:3px;background:#484848;"></div></div>
<svg style="position:absolute;left:61px;top:311px" width="13" height="10" viewBox="0 0 12.6 10" preserveAspectRatio="none"><path d="M0.8 2 Q0.8 0.8 2 0.8 H4.4 L5.4 1.8 H10.6 Q11.6 1.8 11.6 2.8 V9.2 H0.8 Z" fill="#F0B830" stroke="#A87008" stroke-width="0.8"/>
<path d="M1.6 1.6 H4.2" stroke="#FFF4C8" stroke-width="0.9"/>
<path d="M2.4 3.8 H11.4 V9.2 H1.8 Z" fill="#FFE260" stroke="#C08A10" stroke-width="0.6"/>
<path d="M2.6 4.4 H10.8" stroke="#FFF6D0" stroke-width="0.8"/>
<path d="M0.8 9.4 H11.8" stroke="#8A5A08" stroke-width="0.8"/></svg>
<div class="t" style="left:77px;top:313px;font-size:8.8px;color:#333;font-weight:normal;font-family:'Liberation Sans', sans-serif;">DEFAULT</div>
<div style="position:absolute;left:34px;top:327px;width:8px;height:8px;box-sizing:border-box;border:1px solid #A3A097;background:#fff;"><div style="position:absolute;left:1.5px;top:2.5px;width:3px;height:1px;background:#484848;"></div></div>
<svg style="position:absolute;left:46px;top:324px" width="13" height="10" viewBox="0 0 12.6 10" preserveAspectRatio="none"><path d="M0.8 2 Q0.8 0.8 2 0.8 H4.4 L5.4 1.8 H10 Q10.8 1.8 10.8 2.6 V8.8 H0.8 Z" fill="#F0B830" stroke="#A87008" stroke-width="0.8"/>
<path d="M1.6 1.6 H4.2" stroke="#FFF4C8" stroke-width="0.9"/>
<path d="M1.4 2.4 V7" stroke="#FFE890" stroke-width="0.8"/>
<path d="M2.6 4.2 H12 L10.6 9.4 H0.8 Z" fill="#FFE260" stroke="#9A6406" stroke-width="0.8"/>
<path d="M3 5 H11" stroke="#FFF6C8" stroke-width="0.8"/></svg>
<div class="t" style="left:62px;top:326px;font-size:8.8px;color:#333;font-weight:normal;font-family:'Liberation Sans', sans-serif;">Locator</div>
<div style="position:absolute;left:49px;top:340px;width:8px;height:8px;box-sizing:border-box;border:1px solid #A3A097;background:#fff;"><div style="position:absolute;left:1.5px;top:2.5px;width:3px;height:1px;background:#484848;"></div><div style="position:absolute;left:2.5px;top:1.5px;width:1px;height:3px;background:#484848;"></div></div>
<svg style="position:absolute;left:62px;top:338px" width="11" height="10" viewBox="0 0 11 10" preserveAspectRatio="none"><path d="M5.5 0.6 L10.4 2.7 L5.5 4.7 L0.6 2.7 Z" fill="#E4D6C2"/>
<path d="M0.6 2.7 L5.5 4.7 V9.5 L0.6 7.4 Z" fill="#F8DEAA"/>
<path d="M5.5 4.7 L10.4 2.7 V7.4 L5.5 9.5 Z" fill="#F08808"/>
<path d="M5.5 0.6 L10.4 2.7 V7.4 L5.5 9.5 L0.6 7.4 V2.7 Z" fill="none" stroke="#5A4834" stroke-width="0.85"/>
<ellipse cx="4" cy="5.6" rx="0.9" ry="1.5" fill="#A8601A"/>
<circle cx="3.6" cy="3.4" r="0.7" fill="#403020"/>
<circle cx="6.9" cy="5.2" r="0.7" fill="#403020"/></svg>
<div class="t" style="left:77px;top:339px;font-size:8.8px;color:#333;font-weight:normal;font-family:'Liberation Sans', sans-serif;">locator1</div>
<div style="position:absolute;left:34px;top:353px;width:8px;height:8px;box-sizing:border-box;border:1px solid #A3A097;background:#fff;"><div style="position:absolute;left:1.5px;top:2.5px;width:3px;height:1px;background:#484848;"></div><div style="position:absolute;left:2.5px;top:1.5px;width:1px;height:3px;background:#484848;"></div></div>
<svg style="position:absolute;left:46px;top:350px" width="13" height="10" viewBox="0 0 12.6 10" preserveAspectRatio="none"><path d="M0.8 2 Q0.8 0.8 2 0.8 H4.4 L5.4 1.8 H10 Q10.8 1.8 10.8 2.6 V8.8 H0.8 Z" fill="#F0B830" stroke="#A87008" stroke-width="0.8"/>
<path d="M1.6 1.6 H4.2" stroke="#FFF4C8" stroke-width="0.9"/>
<path d="M1.4 2.4 V7" stroke="#FFE890" stroke-width="0.8"/>
<path d="M2.6 4.2 H12 L10.6 9.4 H0.8 Z" fill="#FFE260" stroke="#9A6406" stroke-width="0.8"/>
<path d="M3 5 H11" stroke="#FFF6C8" stroke-width="0.8"/></svg>
<div class="t" style="left:62px;top:352px;font-size:8.8px;color:#333;font-weight:normal;font-family:'Liberation Sans', sans-serif;">Manager</div>
<div style="position:absolute;left:34px;top:366px;width:8px;height:8px;box-sizing:border-box;border:1px solid #A3A097;background:#fff;"><div style="position:absolute;left:1.5px;top:2.5px;width:3px;height:1px;background:#484848;"></div></div>
<svg style="position:absolute;left:46px;top:363px" width="13" height="10" viewBox="0 0 12.6 10" preserveAspectRatio="none"><path d="M0.8 2 Q0.8 0.8 2 0.8 H4.4 L5.4 1.8 H10 Q10.8 1.8 10.8 2.6 V8.8 H0.8 Z" fill="#F0B830" stroke="#A87008" stroke-width="0.8"/>
<path d="M1.6 1.6 H4.2" stroke="#FFF4C8" stroke-width="0.9"/>
<path d="M1.4 2.4 V7" stroke="#FFE890" stroke-width="0.8"/>
<path d="M2.6 4.2 H12 L10.6 9.4 H0.8 Z" fill="#FFE260" stroke="#9A6406" stroke-width="0.8"/>
<path d="M3 5 H11" stroke="#FFF6C8" stroke-width="0.8"/></svg>
<div class="t" style="left:62px;top:365px;font-size:8.8px;color:#333;font-weight:normal;font-family:'Liberation Sans', sans-serif;">Region</div>
<div style="position:absolute;left:49px;top:379px;width:8px;height:8px;box-sizing:border-box;border:1px solid #A3A097;background:#fff;"><div style="position:absolute;left:1.5px;top:2.5px;width:3px;height:1px;background:#484848;"></div></div>
<svg style="position:absolute;left:61px;top:376px" width="13" height="10" viewBox="0 0 12.6 10" preserveAspectRatio="none"><path d="M0.8 2 Q0.8 0.8 2 0.8 H4.4 L5.4 1.8 H10 Q10.8 1.8 10.8 2.6 V8.8 H0.8 Z" fill="#F0B830" stroke="#A87008" stroke-width="0.8"/>
<path d="M1.6 1.6 H4.2" stroke="#FFF4C8" stroke-width="0.9"/>
<path d="M1.4 2.4 V7" stroke="#FFE890" stroke-width="0.8"/>
<path d="M2.6 4.2 H12 L10.6 9.4 H0.8 Z" fill="#FFE260" stroke="#9A6406" stroke-width="0.8"/>
<path d="M3 5 H11" stroke="#FFF6C8" stroke-width="0.8"/></svg>
<div class="t" style="left:77px;top:378px;font-size:8.8px;color:#333;font-weight:normal;font-family:'Liberation Sans', sans-serif;">/region1</div>
<div style="position:absolute;left:65px;top:392px;width:8px;height:8px;box-sizing:border-box;border:1px solid #A3A097;background:#fff;"><div style="position:absolute;left:1.5px;top:2.5px;width:3px;height:1px;background:#484848;"></div><div style="position:absolute;left:2.5px;top:1.5px;width:1px;height:3px;background:#484848;"></div></div>
<svg style="position:absolute;left:78px;top:390px" width="11" height="10" viewBox="0 0 11 10" preserveAspectRatio="none"><path d="M5.5 0.6 L10.4 2.7 L5.5 4.7 L0.6 2.7 Z" fill="#E4D6C2"/>
<path d="M0.6 2.7 L5.5 4.7 V9.5 L0.6 7.4 Z" fill="#F8DEAA"/>
<path d="M5.5 4.7 L10.4 2.7 V7.4 L5.5 9.5 Z" fill="#F08808"/>
<path d="M5.5 0.6 L10.4 2.7 V7.4 L5.5 9.5 L0.6 7.4 V2.7 Z" fill="none" stroke="#5A4834" stroke-width="0.85"/>
<ellipse cx="4" cy="5.6" rx="0.9" ry="1.5" fill="#A8601A"/>
<circle cx="3.6" cy="3.4" r="0.7" fill="#403020"/>
<circle cx="6.9" cy="5.2" r="0.7" fill="#403020"/></svg>
<div class="t" style="left:92px;top:391px;font-size:8.8px;color:#333;font-weight:normal;font-family:'Liberation Sans', sans-serif;">server2</div>
<div style="position:absolute;left:49px;top:404px;width:8px;height:8px;box-sizing:border-box;border:1px solid #A3A097;background:#fff;"><div style="position:absolute;left:1.5px;top:2.5px;width:3px;height:1px;background:#484848;"></div><div style="position:absolute;left:2.5px;top:1.5px;width:1px;height:3px;background:#484848;"></div></div>
<svg style="position:absolute;left:61px;top:402px" width="13" height="10" viewBox="0 0 12.6 10" preserveAspectRatio="none"><path d="M0.8 2 Q0.8 0.8 2 0.8 H4.4 L5.4 1.8 H10.6 Q11.6 1.8 11.6 2.8 V9.2 H0.8 Z" fill="#F0B830" stroke="#A87008" stroke-width="0.8"/>
<path d="M1.6 1.6 H4.2" stroke="#FFF4C8" stroke-width="0.9"/>
<path d="M2.4 3.8 H11.4 V9.2 H1.8 Z" fill="#FFE260" stroke="#C08A10" stroke-width="0.6"/>
<path d="M2.6 4.4 H10.8" stroke="#FFF6D0" stroke-width="0.8"/>
<path d="M0.8 9.4 H11.8" stroke="#8A5A08" stroke-width="0.8"/></svg>
<div class="t" style="left:77px;top:404px;font-size:8.8px;color:#333;font-weight:normal;font-family:'Liberation Sans', sans-serif;">/region2</div>
<div style="position:absolute;left:49px;top:417px;width:8px;height:8px;box-sizing:border-box;border:1px solid #A3A097;background:#fff;"><div style="position:absolute;left:1.5px;top:2.5px;width:3px;height:1px;background:#484848;"></div><div style="position:absolute;left:2.5px;top:1.5px;width:1px;height:3px;background:#484848;"></div></div>
<svg style="position:absolute;left:61px;top:415px" width="13" height="10" viewBox="0 0 12.6 10" preserveAspectRatio="none"><path d="M0.8 2 Q0.8 0.8 2 0.8 H4.4 L5.4 1.8 H10.6 Q11.6 1.8 11.6 2.8 V9.2 H0.8 Z" fill="#F0B830" stroke="#A87008" stroke-width="0.8"/>
<path d="M1.6 1.6 H4.2" stroke="#FFF4C8" stroke-width="0.9"/>
<path d="M2.4 3.8 H11.4 V9.2 H1.8 Z" fill="#FFE260" stroke="#C08A10" stroke-width="0.6"/>
<path d="M2.6 4.4 H10.8" stroke="#FFF6D0" stroke-width="0.8"/>
<path d="M0.8 9.4 H11.8" stroke="#8A5A08" stroke-width="0.8"/></svg>
<div class="t" style="left:77px;top:417px;font-size:8.8px;color:#333;font-weight:normal;font-family:'Liberation Sans', sans-serif;">/region3</div>
<div style="position:absolute;left:49px;top:430px;width:8px;height:8px;box-sizing:border-box;border:1px solid #A3A097;background:#fff;"><div style="position:absolute;left:1.5px;top:2.5px;width:3px;height:1px;background:#484848;"></div><div style="position:absolute;left:2.5px;top:1.5px;width:1px;height:3px;background:#484848;"></div></div>
<svg style="position:absolute;left:61px;top:428px" width="13" height="10" viewBox="0 0 12.6 10" preserveAspectRatio="none"><path d="M0.8 2 Q0.8 0.8 2 0.8 H4.4 L5.4 1.8 H10.6 Q11.6 1.8 11.6 2.8 V9.2 H0.8 Z" fill="#F0B830" stroke="#A87008" stroke-width="0.8"/>
<path d="M1.6 1.6 H4.2" stroke="#FFF4C8" stroke-width="0.9"/>
<path d="M2.4 3.8 H11.4 V9.2 H1.8 Z" fill="#FFE260" stroke="#C08A10" stroke-width="0.6"/>
<path d="M2.6 4.4 H10.8" stroke="#FFF6D0" stroke-width="0.8"/>
<path d="M0.8 9.4 H11.8" stroke="#8A5A08" stroke-width="0.8"/></svg>
<div class="t" style="left:77px;top:430px;font-size:8.8px;color:#333;font-weight:normal;font-family:'Liberation Sans', sans-serif;">/region4</div>
<div style="position:absolute;left:34px;top:443px;width:8px;height:8px;box-sizing:border-box;border:1px solid #A3A097;background:#fff;"><div style="position:absolute;left:1.5px;top:2.5px;width:3px;height:1px;background:#484848;"></div><div style="position:absolute;left:2.5px;top:1.5px;width:1px;height:3px;background:#484848;"></div></div>
<svg style="position:absolute;left:47px;top:442px" width="11" height="10" viewBox="0 0 11 10" preserveAspectRatio="none"><path d="M5.5 0.6 L10.4 2.7 L5.5 4.7 L0.6 2.7 Z" fill="#E4D6C2"/>
<path d="M0.6 2.7 L5.5 4.7 V9.5 L0.6 7.4 Z" fill="#F8DEAA"/>
<path d="M5.5 4.7 L10.4 2.7 V7.4 L5.5 9.5 Z" fill="#F08808"/>
<path d="M5.5 0.6 L10.4 2.7 V7.4 L5.5 9.5 L0.6 7.4 V2.7 Z" fill="none" stroke="#5A4834" stroke-width="0.85"/>
<ellipse cx="4" cy="5.6" rx="0.9" ry="1.5" fill="#A8601A"/>
<circle cx="3.6" cy="3.4" r="0.7" fill="#403020"/>
<circle cx="6.9" cy="5.2" r="0.7" fill="#403020"/></svg>
<div class="t" style="left:62px;top:443px;font-size:8.8px;color:#333;font-weight:normal;font-family:'Liberation Sans', sans-serif;">locator1</div>
<div style="position:absolute;left:34px;top:456px;width:8px;height:8px;box-sizing:border-box;border:1px solid #A3A097;background:#fff;"><div style="position:absolute;left:1.5px;top:2.5px;width:3px;height:1px;background:#484848;"></div><div style="position:absolute;left:2.5px;top:1.5px;width:1px;height:3px;background:#484848;"></div></div>
<svg style="position:absolute;left:47px;top:455px" width="11" height="10" viewBox="0 0 11 10" preserveAspectRatio="none"><path d="M5.5 0.6 L10.4 2.7 L5.5 4.7 L0.6 2.7 Z" fill="#E4D6C2"/>
<path d="M0.6 2.7 L5.5 4.7 V9.5 L0.6 7.4 Z" fill="#F8DEAA"/>
<path d="M5.5 4.7 L10.4 2.7 V7.4 L5.5 9.5 Z" fill="#F08808"/>
<path d="M5.5 0.6 L10.4 2.7 V7.4 L5.5 9.5 L0.6 7.4 V2.7 Z" fill="none" stroke="#5A4834" stroke-width="0.85"/>
<ellipse cx="4" cy="5.6" rx="0.9" ry="1.5" fill="#A8601A"/>
<circle cx="3.6" cy="3.4" r="0.7" fill="#403020"/>
<circle cx="6.9" cy="5.2" r="0.7" fill="#403020"/></svg>
<div class="t" style="left:62px;top:456px;font-size:8.8px;color:#333;font-weight:normal;font-family:'Liberation Sans', sans-serif;">server1</div>
<div style="position:absolute;left:34px;top:469px;width:8px;height:8px;box-sizing:border-box;border:1px solid #A3A097;background:#fff;"><div style="position:absolute;left:1.5px;top:2.5px;width:3px;height:1px;background:#484848;"></div><div style="position:absolute;left:2.5px;top:1.5px;width:1px;height:3px;background:#484848;"></div></div>
<svg style="position:absolute;left:47px;top:468px" width="11" height="10" viewBox="0 0 11 10" preserveAspectRatio="none"><path d="M5.5 0.6 L10.4 2.7 L5.5 4.7 L0.6 2.7 Z" fill="#E4D6C2"/>
<path d="M0.6 2.7 L5.5 4.7 V9.5 L0.6 7.4 Z" fill="#F8DEAA"/>
<path d="M5.5 4.7 L10.4 2.7 V7.4 L5.5 9.5 Z" fill="#F08808"/>
<path d="M5.5 0.6 L10.4 2.7 V7.4 L5.5 9.5 L0.6 7.4 V2.7 Z" fill="none" stroke="#5A4834" stroke-width="0.85"/>
<ellipse cx="4" cy="5.6" rx="0.9" ry="1.5" fill="#A8601A"/>
<circle cx="3.6" cy="3.4" r="0.7" fill="#403020"/>
<circle cx="6.9" cy="5.2" r="0.7" fill="#403020"/></svg>
<div class="t" style="left:62px;top:469px;font-size:8.8px;color:#333;font-weight:normal;font-family:'Liberation Sans', sans-serif;">server2</div>
<div style="position:absolute;left:3px;top:482px;width:8px;height:8px;box-sizing:border-box;border:1px solid #A3A097;background:#fff;"><div style="position:absolute;left:1.5px;top:2.5px;width:3px;height:1px;background:#484848;"></div><div style="position:absolute;left:2.5px;top:1.5px;width:1px;height:3px;background:#484848;"></div></div>
<svg style="position:absolute;left:15px;top:480px" width="13" height="10" viewBox="0 0 12.6 10" preserveAspectRatio="none"><path d="M0.8 2 Q0.8 0.8 2 0.8 H4.4 L5.4 1.8 H10.6 Q11.6 1.8 11.6 2.8 V9.2 H0.8 Z" fill="#F0B830" stroke="#A87008" stroke-width="0.8"/>
<path d="M1.6 1.6 H4.2" stroke="#FFF4C8" stroke-width="0.9"/>
<path d="M2.4 3.8 H11.4 V9.2 H1.8 Z" fill="#FFE260" stroke="#C08A10" stroke-width="0.6"/>
<path d="M2.6 4.4 H10.8" stroke="#FFF6D0" stroke-width="0.8"/>
<path d="M0.8 9.4 H11.8" stroke="#8A5A08" stroke-width="0.8"/></svg>
<div class="t" style="left:31px;top:481px;font-size:8.8px;color:#333;font-weight:normal;font-family:'Liberation Sans', sans-serif;">JMImplementation</div>
</div>
<div class="b" style="left:232px;top:73px;width:12px;height:13px;"></div>
<svg style="position:absolute;left:234px;top:77px" width="7" height="4" viewBox="0 0 7 4" preserveAspectRatio="none"><path d="M0.5 3.5 L3.5 0.5 L6.5 3.5 Z" fill="#000"/></svg>
<div class="b" style="left:232px;top:86px;width:12px;height:409px;border-bottom-color:#707070;"></div>
<div style="position:absolute;left:232px;top:495px;width:12px;height:51px;background:#E6E4DE;"></div>
<div class="b" style="left:232px;top:546px;width:12px;height:12px;"></div>
<svg style="position:absolute;left:234px;top:550px" width="7" height="4" viewBox="0 0 7 4" preserveAspectRatio="none"><path d="M0.5 0.5 L3.5 3.5 L6.5 0.5 Z" fill="#000"/></svg>
<div style="position:absolute;left:3px;top:558px;width:242px;height:1px;background:#fff;"></div>
</body></html>
